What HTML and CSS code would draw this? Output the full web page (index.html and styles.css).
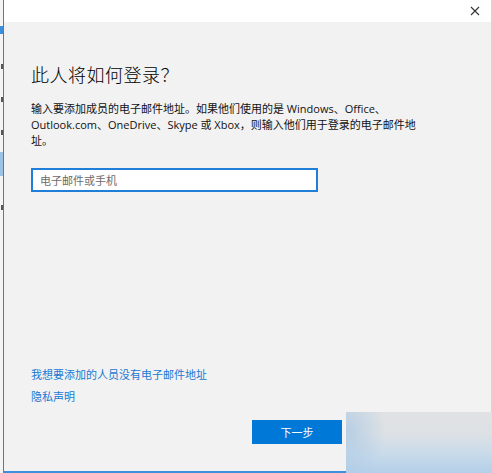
FILE: index.html
```html
<!DOCTYPE html>
<html lang="zh-CN">
<head>
    <meta charset="UTF-8">
    <meta name="viewport" content="width=device-width, initial-scale=1.0">
    <title>Microsoft 帐户</title>
    <link rel="stylesheet" href="styles.css">
</head>
<body>
    <div class="screen">
        <!-- sliver of the settings window behind the dialog -->
        <div class="behind">
            <span class="mark mark-blue" style="top: 26px;"></span>
            <span class="mark" style="top: 64px;"></span>
            <span class="mark" style="top: 97px;"></span>
            <span class="mark" style="top: 130px;"></span>
            <span class="mark-select"></span>
            <span class="mark" style="top: 205px;"></span>
        </div>

        <div class="dialog">
            <div class="titlebar">
                <button class="close-btn" aria-label="关闭">
                    <svg width="10" height="10" viewBox="0 0 10 10">
                        <path d="M1 1 L9 9 M9 1 L1 9" stroke="#333" stroke-width="1.1" fill="none"/>
                    </svg>
                </button>
            </div>

            <div class="content">
                <h1 class="title">此人将如何登录？</h1>
                <p class="intro">
                    输入要添加成员的电子邮件地址。如果他们使用的是 Windows、Office、<br>
                    Outlook.com、OneDrive、Skype 或 Xbox，则输入他们用于登录的电子邮件地<br>
                    址。
                </p>

                <input class="email-input" type="text" placeholder="电子邮件或手机">

                <div class="links">
                    <a href="#" class="link">我想要添加的人员没有电子邮件地址</a>
                    <a href="#" class="link">隐私声明</a>
                </div>
            </div>

            <div class="footer">
                <button class="btn btn-primary">下一步</button>
                <button class="btn">取消</button>
            </div>
        </div>

        <!-- desktop showing through at the corner -->
        <div class="corner-glass"></div>
    </div>
</body>
</html>
```

FILE: styles.css
```css
* {
    box-sizing: border-box;
    margin: 0;
    padding: 0;
}

body {
    font-family: "Open Sans", "Noto Sans CJK SC", sans-serif;
    background: #f2f2f2;
    width: 492px;
    height: 473px;
    overflow: hidden;
}

.screen {
    position: relative;
    display: flex;
    width: 492px;
    height: 473px;
}

.behind {
    position: relative;
    width: 3px;
    background: #f4f4f4;
}

.mark {
    position: absolute;
    left: 1px;
    width: 2px;
    height: 5px;
    background: #555;
}

.mark-blue {
    left: 0;
    width: 3px;
    height: 8px;
    background: #3d8fd8;
}

.mark-select {
    position: absolute;
    top: 152px;
    left: 0;
    width: 3px;
    height: 24px;
    background: #9cc3e6;
}

.dialog {
    flex: 1;
    display: flex;
    flex-direction: column;
    background: #f2f2f2;
    border-left: 1px solid #2a87d6;
    border-right: 1px solid #d6d6d6;
    border-bottom: 2px solid #3b8fdb;
}

.titlebar {
    height: 22px;
    background: #fff;
    display: flex;
    justify-content: flex-end;
    align-items: center;
    padding-right: 8px;
}

.close-btn {
    width: 16px;
    height: 16px;
    border: none;
    background: none;
    display: flex;
    align-items: center;
    justify-content: center;
}

.content {
    flex: 1;
    display: flex;
    flex-direction: column;
    padding: 39px 27px 0;
}

.title {
    font-family: "Noto Sans CJK SC", sans-serif;
    font-size: 18px;
    font-weight: 300;
    line-height: 26px;
    color: #000;
    letter-spacing: 0.5px;
}

.intro {
    margin-top: 14px;
    font-size: 11px;
    line-height: 16px;
    color: #111;
}

.email-input {
    margin-top: 19px;
    width: 287px;
    height: 24px;
    border: 2px solid #1f7fd8;
    background: #fff;
    padding: 0 7px;
    font-family: "Noto Sans CJK SC", sans-serif;
    font-size: 11px;
    outline: none;
}

.email-input::placeholder {
    color: #6b6b6b;
}

.links {
    margin-top: auto;
    display: flex;
    flex-direction: column;
    align-items: flex-start;
    gap: 6px;
    padding-bottom: 7px;
}

.link {
    font-size: 11px;
    line-height: 16px;
    color: #1a78d2;
    text-decoration: none;
}

.footer {
    display: flex;
    justify-content: flex-end;
    gap: 8px;
    padding: 8px 51px 27px 0;
}

.btn {
    width: 90px;
    height: 24px;
    border: 1px solid #ccc;
    background: #ccc;
    font-family: "Noto Sans CJK SC", sans-serif;
    font-size: 11px;
    color: #000;
}

.btn-primary {
    background: #0078d7;
    border-color: #0078d7;
    color: #fff;
}

.corner-glass {
    position: absolute;
    left: 346px;
    top: 412px;
    width: 146px;
    height: 61px;
    background:
        radial-gradient(ellipse 40px 50px at 0% 30%, rgba(150, 190, 226, 0.55), transparent),
        linear-gradient(180deg, #e0e2e4 0%, #dde1e5 35%, #c8daea 70%, #b3cfe9 100%);
}
```
